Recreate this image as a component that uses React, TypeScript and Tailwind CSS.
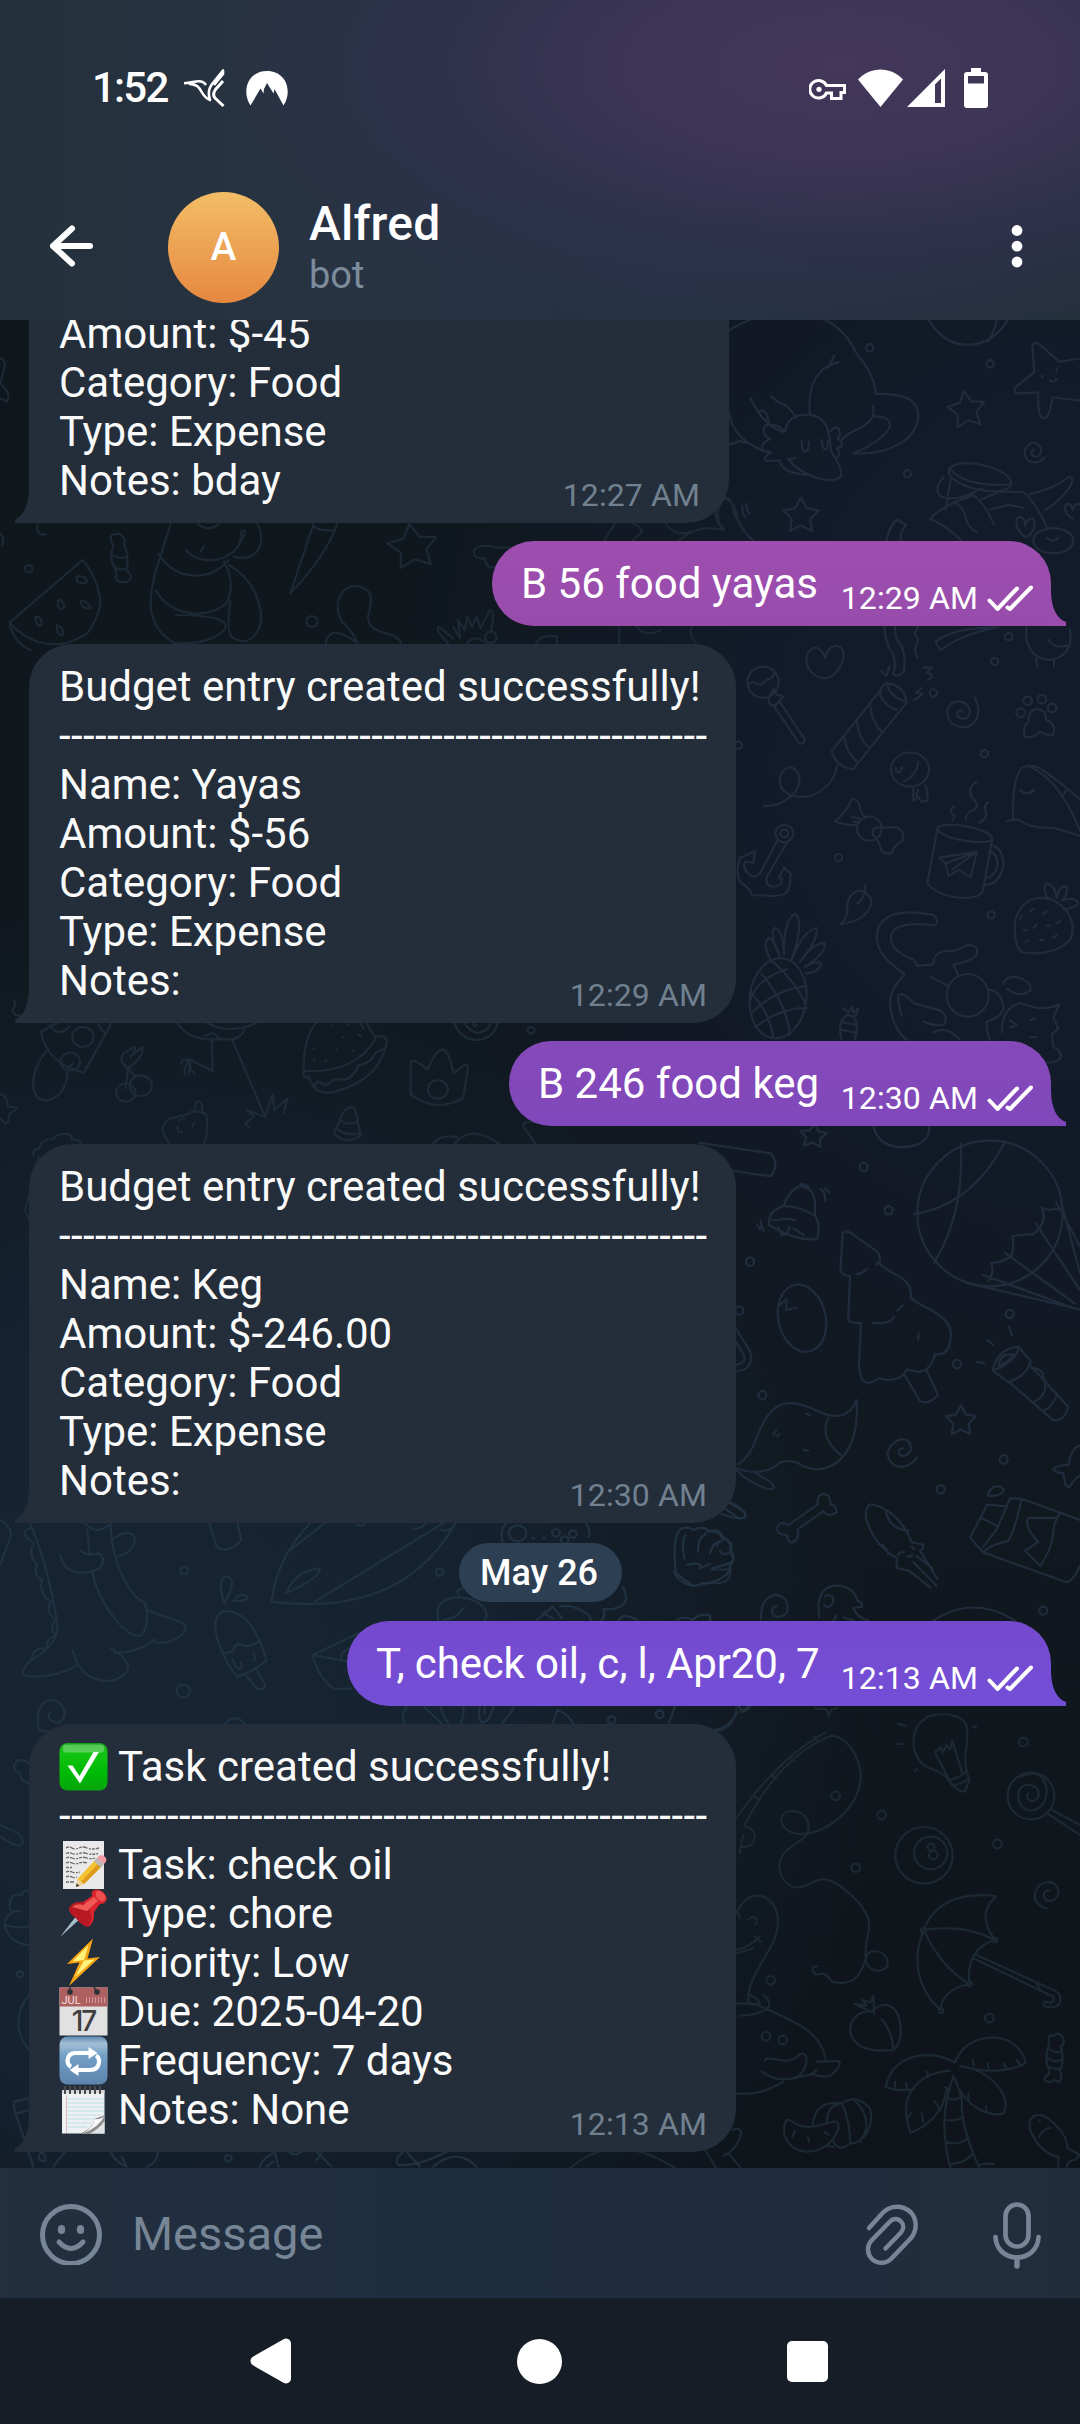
import type { ReactNode } from 'react'

type EmojiName = 'check' | 'memo' | 'pin' | 'bolt' | 'calendar' | 'repeat' | 'notepad'
type Line = { text: string; emoji?: EmojiName }

const DASHES = '-'.repeat(54)

/* ---------- status bar icons ---------- */

function BirdIcon() {
  return (
    <svg width="42" height="38" viewBox="0 0 42 38" fill="none" stroke="white" strokeWidth="2.6" strokeLinejoin="round">
      <path d="M0 14.2C7 14 10 12.300 15 12.300C18.500 12.300 20.500 14 22 16" />
      <path d="M5 14.600C13 15.500 15 18 18 23.500C20 27 22.500 29.500 26 31C24 25 24 20 28.500 14.500L39 1.500V5L30 16" />
      <path d="M39 12L31.500 20.500C29 24 29 26.500 31 29L39.500 37" strokeWidth="3" />
    </svg>
  )
}

function MountainIcon() {
  return (
    <svg width="42" height="35" viewBox="0 0 42 35" fill="white">
      <path d="M4.500 34.500C-5 20 2 0 21 0S47 20 37.500 34.500L28.500 18L27.500 22.500L21 12L18 18L17.500 22.500L14.500 17.500Z" />
    </svg>
  )
}

function KeyIcon() {
  return (
    <svg width="38" height="23" viewBox="0 0 38 23" fill="none" stroke="white" strokeWidth="3">
      <path d="M17.500 7.500A8.800 8.800 0 1 0 17.500 15H22.500V20.500H32V14.500H35.500V7.500Z" />
      <circle cx="10" cy="11.300" r="2.600" fill="white" stroke="none" />
    </svg>
  )
}

function WifiIcon() {
  return (
    <svg width="45" height="38" viewBox="0 0 45 38" fill="white">
      <path d="M0 10.500C12-3 33-3 45 10.500L22.500 38Z" />
    </svg>
  )
}

function SignalIcon() {
  return (
    <svg width="38" height="38" viewBox="0 0 38 38" fill="white">
      <path fillRule="evenodd" d="M38 0V38H0ZM34 9.500L28 15.500V34H34Z" />
    </svg>
  )
}

function BatteryIcon() {
  return (
    <svg width="24" height="40" viewBox="0 0 24 40" fill="white">
      <path fillRule="evenodd" d="M7 0H17V4H21Q24 4 24 7V37Q24 40 21 40H3Q0 40 0 37V7Q0 4 3 4H7ZM4 8V15.500H20V8Z" />
    </svg>
  )
}

/* ---------- emoji ---------- */

function Emoji({ name }: { name: EmojiName }) {
  const drawings: Record<EmojiName, ReactNode> = {
    check: (
      <>
        <defs>
          <linearGradient id="eg" x1="0" y1="0" x2="0" y2="1">
            <stop offset="0" stopColor="#13a013" />
            <stop offset=".2" stopColor="#14c414" />
            <stop offset=".6" stopColor="#00bb06" />
            <stop offset="1" stopColor="#06a50b" />
          </linearGradient>
        </defs>
        <rect x="0.500" y="1" width="48" height="47.500" rx="8" fill="url(#eg)" />
        <rect x="3.500" y="2.500" width="42" height="8" rx="4" fill="#8fe08f" opacity=".55" />
        <path d="M8.500 23.500H13.500L20.500 34L34.500 10H40L21 41.500Z" fill="white" />
      </>
    ),
    memo: (
      <>
        <rect x="4" y="1" width="41" height="48" fill="#e9e9e9" />
        <g stroke="#6b6b6b" strokeWidth="1.300" fill="none" strokeDasharray="3 1 5 1.500 2 1">
          <path d="M7 8Q10 6 13 8T20 8T28 8T40 8" />
          <path d="M7 13.500Q10 12 13 13.500T20 13.500T28 13.500T39 13.500" />
          <path d="M7 18Q10 16.500 13 18T20 18T28 18T36 18" />
          <path d="M7 23Q10 21.500 13 23T20 23T28 23" />
          <path d="M7 27.500H13M7 32Q10 30.500 13 32T21 32M7 37Q10 35.500 13 37T18 37M7 42H15" />
        </g>
        <path d="M17 47L18.500 39L37 19L44 25L25 44Z" fill="#f4c430" />
        <path d="M21.500 42.500L40.500 22L44 25L25 44Z" fill="#dd9a1c" />
        <path d="M17 47L18.500 39L25 44Z" fill="#ecd0a0" />
        <path d="M17 47L17.600 43.600L20.500 45.700Z" fill="#333" />
        <path d="M35 21.500L38 18L45 24L42 27.500Z" fill="#b9b9b9" />
        <path d="M38 18Q41 13.500 45 16Q50 19 45 24Z" fill="#f29aa5" />
      </>
    ),
    pin: (
      <>
        <path d="M1 48L18 26L22 29Z" fill="#a9bccb" />
        <path d="M10 19Q14 12 24 13L33 7Q31 1 38 0.500Q45 1 48 9Q47 15 41 15L35 23Q36 34 29 38Q22 36 17 29Q10 24 10 19Z" fill="#d9232e" />
        <path d="M10 19Q14 12 24 13Q33 20 32 31Q31 36 29 38Q22 36 17 29Q10 24 10 19Z" fill="#b81822" />
        <path d="M13 18Q17 14 24 16L35 8L39 12L28 22Z" fill="#ef5a55" />
        <ellipse cx="41.500" cy="7" rx="6" ry="4" transform="rotate(50 41.500 7)" fill="#f0504f" />
      </>
    ),
    bolt: (
      <>
        <path d="M34 0.500L8 26L20.500 24.500L10 48L41 19L28.500 20.500Z" fill="#f6a313" />
        <path d="M29.500 7L13.500 23.500L25 22L16 39L35.500 21.500L25 22.500Z" fill="#fff27a" />
      </>
    ),
    calendar: (
      <>
        <rect x="0.500" y="0.500" width="48" height="48" fill="#e1e1e1" />
        <rect x="0.500" y="0.500" width="48" height="19" fill="#ae5f60" />
        <circle cx="11" cy="5" r="2.800" fill="#2a2f38" />
        <circle cx="38" cy="5" r="2.800" fill="#2a2f38" />
        <path d="M11 0V4M35 0L37 4" stroke="#2a2f38" strokeWidth="1.500" />
        <path d="M27 13H47" stroke="#d09a9a" strokeWidth="6" strokeDasharray="1 2" />
        <text x="2.500" y="16.500" fontSize="11" fill="#f4dfdf" fontFamily="Roboto, sans-serif">JUL</text>
        <text x="24.500" y="44" fontSize="28" fill="#3f3f3f" textAnchor="middle" letterSpacing="-2" fontWeight="500" fontFamily="Inter, sans-serif">17</text>
      </>
    ),
    repeat: (
      <>
        <defs>
          <linearGradient id="er" x1="0" y1="0" x2="0" y2="1">
            <stop offset="0" stopColor="#5f8bb5" />
            <stop offset=".15" stopColor="#a3bed6" />
            <stop offset=".4" stopColor="#739fc7" />
            <stop offset="1" stopColor="#5d84ad" />
          </linearGradient>
        </defs>
        <rect x="0.500" y="0.500" width="48" height="48" rx="8" fill="url(#er)" />
        <g fill="none" stroke="white" strokeWidth="4.200">
          <path d="M12 31Q8.500 29 8.500 24.500Q9 17 17 17H31" />
          <path d="M37 19.500Q40.500 21.500 40 26.500Q39 34 31 34H18" />
        </g>
        <path d="M29.500 11L38.500 17L29.500 23ZM19.500 28L10.500 34L19.500 40Z" fill="white" />
      </>
    ),
    notepad: (
      <>
        <rect x="3" y="5" width="42.500" height="43.500" fill="#eef1f2" />
        <path d="M8 14H45M8 18H45M8 22H45M8 26H45M8 30H42M8 34H36M8 38H32M8 42H28" stroke="#bcdbe6" strokeWidth="1.200" />
        <path d="M7.500 10V48" stroke="#dba9b5" strokeWidth="0.800" />
        <path d="M3 6.500H45.500" stroke="#d5d5d5" strokeWidth="3" />
        <path d="M6 1V9M11 1V9M16 1V9M21 1V9M26 1V9M31 1V9M36 1V9M41 1V9" stroke="#48484d" strokeWidth="2" />
        <path d="M45.500 30Q38 33 35 34Q35 42 22 48.500H45.500Z" fill="#8c8c8c" />
        <path d="M45.500 31Q40 42 24 48.500Q36 41 34.500 34Q41 35 45.500 31Z" fill="#f8f8f8" />
        <path d="M45.500 36Q40 44 31 48.500H45.500Z" fill="#dfe5e8" />
      </>
    ),
  }
  return (
    <svg className="mr-[10px] h-[49px] w-[49px] shrink-0" viewBox="0 0 49 49">
      {drawings[name]}
    </svg>
  )
}

/* ---------- chat wallpaper ---------- */

function Star({ x, y, r, ry = r, a = 0 }: { x: number; y: number; r: number; ry?: number; a?: number }) {
  let d = ''
  for (let i = 0; i < 10; i++) {
    const k = i % 2 ? 0.52 : 1
    const t = ((i * 36 - 90 + a) * Math.PI) / 180
    d += `${i ? 'L' : 'M'}${(x + r * k * Math.cos(t)).toFixed(1)} ${(y + ry * k * Math.sin(t)).toFixed(1)}`
  }
  return <path d={d + 'Z'} />
}

function Spiral({ x, y, r, ry = r }: { x: number; y: number; r: number; ry?: number }) {
  return (
    <path
      transform={`translate(${x} ${y}) scale(${r / 10} ${ry / 10})`}
      d="M10 5C6 11 -6 12 -9 3C-11 -6 -2 -12 4 -8C9 -4 8 3 2 4C-3 4 -4 -2 0 -3"
    />
  )
}

function Dots({ points, rx, ry }: { points: number[][]; rx: number; ry: number }) {
  return (
    <>
      {points.map(([x, y]) => (
        <ellipse key={`${x}-${y}`} cx={x} cy={y} rx={rx} ry={ry} />
      ))}
    </>
  )
}

function Doodles() {
  return (
    <svg
      className="absolute inset-0 [&_*]:[vector-effect:non-scaling-stroke]"
      width="1080"
      height="1848"
      viewBox="0 320 1080 1848"
      fill="none"
      stroke="#202c3c"
      strokeWidth="2.2"
      strokeLinecap="round"
      strokeLinejoin="round"
    >
      {/* upper right */}
      <g transform="translate(700 310) scale(.33333 .48469)">
        <path d="M88 42C180 0 320-5 400 30C450 55 460 80 475 95C500 115 525 140 527 173C600 172 655 180 655 220C650 270 560 300 460 296C500 285 560 260 570 240C572 225 550 218 520 220C480 255 460 240 425 268M520 198V220" />
        <path d="M330 215C320 150 360 115 415 108M385 118L403 94M152 182Q190 240 252 252M213 178L235 190Q265 195 288 222M175 210Q200 200 206 232M88 215Q100 270 210 296M88 278L120 270L150 276" />
        <path d="M255 250C265 215 300 215 330 216C380 220 390 250 392 290C400 300 425 320 424 342C400 365 300 340 265 308L285 305M255 250L235 240Q190 230 190 250Q195 262 210 266Q180 275 187 290L215 293Q185 305 200 312L240 310Q240 335 320 340" />
        <path d="M305 270Q305 292 316 292Q328 290 326 272M365 268Q368 288 376 288Q385 285 383 270M392 250Q410 235 418 248Q425 258 412 265Q428 270 425 282L410 285Q425 295 410 305" />
        <Dots rx={11} ry={7.5} points={[[509, 78], [870, 111], [622, 338], [884, 725], [926, 674], [853, 915], [416, 1130], [873, 1248], [700, 790], [115, 898]]} />
        <path d="M688 22Q730 72 805 72Q880 70 922 22M890 22Q880 50 865 64" />
        <path d="M997 75Q1005 62 1020 72L1078 107L1140 100M997 75L1003 128L945 160Q940 172 955 172L1015 170Q1010 225 1035 223Q1050 220 1057 180L1140 187M1050 145Q1060 152 1070 142M1027 135V139M1070 121V126" />
        <Star x={800} y={207} r={58} ry={40} a={-8} />
        <Star x={303} y={425} r={56} ry={38} />
        <Spiral x={1002} y={294} r={30} ry={21} />
        <ellipse cx="840" cy="345" rx="95" ry="26" transform="rotate(8 840 345)" />
        <path d="M752 330Q800 365 930 360M730 345Q700 370 720 383Q760 400 845 368M752 350L737 412M690 432Q720 405 820 382Q850 395 882 442M770 400Q795 410 797 430Q805 450 830 458M690 432Q730 440 784 475M845 390L900 375H970Q1010 400 1042 450M870 412L925 402L970 408M990 380Q1060 370 1105 345Q1120 342 1116 357Q1090 390 1035 413" />
        <ellipse cx="1060" cy="476" rx="60" ry="26" />
        <path d="M974 468C940 450 945 420 965 428Q977 432 975 445Q985 425 1002 432C1010 450 990 468 974 468ZM1118 430C1090 420 1090 400 1105 400Q1115 400 1118 412Q1125 395 1140 402M1040 470Q1058 482 1075 470" />
        <path d="M560 475Q570 440 593 433L619 444Q600 455 602 475M75 388Q95 385 103 420Q130 460 158 475M127 405Q125 420 138 427M140 400Q138 415 149 420M45 415Q50 440 72 453" />
        <ellipse cx="189" cy="768" rx="47" ry="32" />
        <path d="M145 775Q155 762 170 772Q190 775 200 762Q225 760 222 745M205 800L215 790L222 780L230 793L250 798L235 808Q230 818 210 815ZM220 815L295 892Q310 900 314 886L237 806" />
        <path d="M375 718C365 690 325 690 319 720C318 745 350 760 380 760C410 755 435 725 430 705C420 685 385 690 375 718Z" />
        <path d="M553 652Q555 690 580 710Q590 740 578 750Q595 760 612 745Q620 700 590 680Q585 665 585 652M655 652L644 668Q660 680 650 690Q640 700 652 717M706 685Q760 655 895 655M706 685L722 702Q780 670 890 655" />
        <path d="M540 785L395 910Q410 945 460 947L620 810Q615 775 560 770Q540 775 540 795Q560 820 590 825M560 770Q570 800 620 808M510 815Q515 850 548 872M470 848Q475 885 510 905M433 882Q440 915 475 935M412 940Q400 985 330 1003C260 1010 225 985 245 955Q275 930 297 960Q305 985 270 1005Q235 1025 192 1023" />
        <path d="M543 745L560 755L568 735M670 738H697L680 748Q710 755 685 763M665 780L648 790L668 793L642 805" />
        <path d="M980 655C970 690 1000 720 1045 722C1090 720 1120 700 1110 660M1045 680Q1060 700 1105 692M1007 718L1012 735M1062 722V735" />
        <path d="M825 800C850 835 825 862 785 861C740 858 730 825 755 812C785 800 815 815 808 835C795 850 765 842 773 830Q780 822 790 830" />
        <path d="M975 880Q965 860 985 850Q985 825 1010 823Q1040 825 1038 845Q1070 855 1060 875Q1045 880 1020 870Q1000 885 975 880Z" />
        <Dots rx={13} ry={9} points={[[962, 831], [983, 806], [1026, 803], [1056, 821]]} />
        <ellipse cx="630" cy="948" rx="57" ry="35" />
        <path d="M655 932Q650 960 612 973M588 945Q585 955 600 953L607 943M640 987V1012L655 1005L665 1015L682 1012Q685 990 675 980M655 990Q645 1000 655 1005" />
        <path d="M405 1055Q440 1035 455 1010Q475 1005 480 1030L495 1048M405 1055Q440 1065 472 1062M455 1045L485 1052M460 1055L478 1058M520 1085Q515 1070 530 1068L590 1067Q615 1075 608 1095Q580 1105 575 1120Q555 1125 545 1115Q540 1100 520 1082" />
        <ellipse cx="508" cy="1070" rx="37" ry="25" />
        <path d="M940 1050Q935 970 965 945Q1000 930 1050 960Q1110 990 1140 1010M922 1055Q950 1045 975 1060Q1010 1070 1060 1068L1140 1085M990 942Q1080 970 1140 1075M960 990Q980 1005 1003 990M1100 990L1090 1000" />
        <ellipse cx="795" cy="1080" rx="82" ry="15" transform="rotate(7 795 1080)" />
        <path d="M713 1066L682 1183Q720 1212 790 1213Q840 1212 848 1200L877 1092M872 1103Q910 1110 910 1145Q900 1185 855 1186M868 1118Q892 1120 893 1145Q885 1170 858 1172M718 1130L830 1118L812 1170L775 1155L745 1168L737 1142ZM737 1142L830 1118L755 1155M797 1050Q800 1035 825 1030Q840 1020 815 1005Q800 985 830 973M758 1052Q770 1045 755 1038Q745 1030 763 1024M838 1058Q860 1050 858 1038Q850 1020 865 1015" />
        <ellipse cx="253" cy="1080" rx="27" ry="18" />
        <ellipse cx="253" cy="1080" rx="12" ry="8" />
        <path d="M232 1095L180 1162Q170 1170 155 1168Q125 1155 135 1138L160 1140L165 1117L120 1130Q105 1160 120 1180Q145 1190 158 1208L190 1207Q220 1212 255 1205Q275 1190 270 1168L275 1165L252 1150L237 1172L247 1175Q245 1190 215 1190Q195 1185 200 1170L262 1097" />
        <path d="M422 1267Q445 1255 442 1225Q450 1200 480 1198Q515 1205 514 1225Q500 1260 422 1267M497 1187Q495 1215 470 1225" />
        <ellipse cx="234" cy="1420" rx="88" ry="80" transform="rotate(-35 234 1420)" />
        <path d="M185 1370Q260 1430 270 1495M220 1345Q290 1390 315 1430M155 1450Q230 1400 320 1395M150 1425Q170 1380 260 1360M165 1480Q240 1440 320 1440M155 1410Q210 1450 220 1500" />
        <path d="M215 1345Q185 1310 205 1295Q225 1300 240 1335Q205 1285 225 1275Q250 1280 252 1330Q250 1260 285 1246Q315 1260 275 1340Q310 1280 350 1275Q355 1300 300 1345Q340 1305 375 1307Q375 1330 315 1355Q350 1340 365 1350Q350 1370 318 1368" />
        <path d="M1000 1215Q1060 1205 1100 1240Q1130 1270 1110 1300Q1060 1335 965 1325Q940 1310 945 1260Q960 1225 1000 1215ZM1045 1215Q1025 1190 1040 1183Q1065 1185 1070 1213Q1080 1185 1100 1190Q1105 1205 1085 1218Q1120 1210 1135 1222Q1130 1235 1090 1236M965 1250L960 1258M1000 1235L990 1242M1040 1240L1030 1247M970 1280H980M1010 1268L1000 1275M1050 1270H1040M1080 1260L1070 1266M975 1305L985 1300M1020 1300H1030M1060 1295L1070 1290" />
        <path d="M615 1370C570 1350 515 1320 535 1275C560 1235 640 1240 700 1248Q720 1258 705 1270C660 1265 600 1265 580 1280C555 1310 600 1330 640 1340L652 1353L700 1350Q700 1325 740 1322Q770 1325 800 1310Q840 1310 830 1330Q810 1345 760 1350L775 1373M615 1370Q570 1400 570 1430Q575 1480 620 1506M605 1455Q590 1420 597 1412Q620 1410 640 1430L720 1445Q750 1460 730 1475Q700 1478 670 1468M692 1376L740 1393M868 1402Q905 1405 910 1440Q905 1460 860 1468Q860 1490 870 1506M700 1490Q740 1475 780 1506M910 1390Q920 1370 960 1378Q1000 1390 990 1405Q960 1420 920 1400M905 1490Q905 1440 960 1430L1000 1438Q1040 1445 1078 1433L1060 1460L1075 1482L1055 1495L1060 1520Q1090 1530 1080 1545Q1060 1555 1035 1552M930 1465L950 1475L930 1480M990 1465L1005 1462M990 1500H1010" />
        <ellipse cx="803" cy="1414" rx="63" ry="44" />
        <path d="M425 1505Q410 1470 440 1455Q475 1455 470 1485L465 1505M430 1470L470 1475M425 1485L468 1492M430 1440L445 1450L455 1437L460 1450L473 1442Q475 1455 460 1458" />
      </g>

      {/* middle right */}
      <g transform="translate(700 1120) scale(.33333 .38265)">
        <Star x={340} y={42} r={42} ry={33} a={6} />
        <Star x={783} y={787} r={47} ry={42} />
        <Dots rx={12} ry={11} points={[[491, 123], [566, 236], [150, 370], [187, 719], [722, 965], [911, 887], [1030, 1282], [118, 498], [929, 507], [771, 638]]} />
        <path d="M0 60L212 87Q240 115 212 147L95 132M520 16Q535 70 605 71Q690 70 688 16" />
        <path d="M250 225Q270 180 300 173Q340 175 345 215V250M250 225Q300 225 345 250Q365 280 350 312Q280 315 208 275Q200 240 250 225ZM215 262H230Q260 255 285 262M298 172Q310 160 328 178M235 280Q240 305 262 298M268 280Q265 300 245 302M310 300L280 283M362 180Q378 192 375 210M375 178L388 190M172 275L180 285M182 262Q182 280 192 290" />
        <ellipse cx="870" cy="244" rx="218" ry="190" />
        <path d="M782 62Q795 240 703 373M916 55Q820 220 643 246M1140 330L1068 215M1140 445L1007 270M1125 480L915 347M1115 490L850 405M1140 495L797 425M1025 228Q1040 240 1082 230M1025 228Q1045 270 1000 298Q950 300 937 305Q945 345 930 358Q900 375 873 373Q885 400 865 420M1082 210L1140 400" />
        <path d="M428 295Q440 285 460 300L525 340Q545 350 538 375C580 410 640 410 632 465C680 500 770 510 750 580Q745 615 705 612Q690 660 650 658L620 652Q600 690 535 675Q480 710 477 640L483 530Q440 535 445 510L450 408Q415 405 422 380ZM470 403Q490 400 500 390M520 530Q570 535 582 515M592 498L608 485M528 378L540 370M655 558V572M615 668L660 735Q690 745 714 718L680 655" />
        <ellipse cx="306" cy="518" rx="70" ry="90" transform="rotate(-20 306 518)" />
        <path d="M236 485L260 468L258 497L290 490M108 545L150 605Q165 650 110 657M108 580L132 615Q140 635 108 640" />
        <path d="M108 910Q190 935 240 895Q280 885 310 905C370 930 480 900 470 732C450 775 410 785 350 760C240 710 200 760 170 830Q150 880 115 900M385 778Q355 830 428 880M318 768L330 771M312 862L325 864M220 822L228 812M230 827L237 822M108 915Q150 950 205 965Q235 965 210 945L165 922M60 1028Q130 1050 137 1035Q130 1010 85 998" />
        <path d="M353 993Q360 970 385 982Q395 1000 390 1005Q410 1005 410 1025Q385 1040 370 1022L293 1070Q300 1095 275 1105Q260 1100 262 1085Q235 1085 230 1068Q240 1045 265 1058L353 1005Z" />
        <path d="M600 835Q570 845 562 870Q570 910 610 906Q640 900 650 882M600 835Q630 830 634 860Q620 885 598 875Q590 860 610 858" />
        <path d="M590 1145Q520 1110 498 1040Q495 1000 520 1005Q600 1025 635 1103L670 1110Q670 1125 660 1125L712 1200M590 1145V1170L628 1178L692 1222M640 1155L710 1218M650 1140L698 1172M558 1025Q570 1070 625 1073M535 1108Q560 1110 565 1135M595 1138Q595 1128 610 1130M622 1140Q635 1145 637 1135M635 1115L642 1122" />
        <path d="M878 655Q890 600 955 592L992 630Q980 670 925 685ZM955 595Q950 630 880 655M895 642Q900 610 940 612Q930 630 895 642M930 687L1060 785Q1095 785 1105 750L990 640M995 648Q1035 650 1030 680M1035 690Q1040 720 1005 735M1070 720Q1060 745 1035 758M862 575L880 588M927 540L936 563M832 632L852 636" />
        <path d="M862 1005L810 1092L850 1130L1100 1208Q1120 1205 1140 1165M862 1005L920 1010L890 1070L850 1115M845 1040L890 1060M965 990L1140 1045M965 990Q945 1070 925 1100Q870 1110 850 1130M920 1010L930 988L965 990M1080 1028Q1060 1050 1058 1090Q1050 1130 1020 1165L975 1125L1015 1103Q970 1060 985 1040H1070M865 975Q885 945 912 965Q905 985 865 982ZM1140 850Q1110 860 1107 900Q1060 905 1060 915Q1075 925 1090 922Q1095 965 1110 958Q1125 935 1140 930" />
        <path d="M15 1080Q50 1060 68 1088Q95 1100 90 1130Q110 1150 90 1165Q100 1210 50 1210H0M50 1115Q55 1100 68 1100M90 1130Q65 1140 60 1125M35 1175H90M0 1172L30 1160M183 1305Q180 1250 225 1241Q270 1245 262 1285Q245 1305 220 1295Q210 1270 230 1270M355 1270Q360 1215 415 1217Q460 1220 472 1255Q490 1262 485 1272L460 1275Q470 1300 505 1308M358 1300L355 1270M375 1245Q400 1235 400 1258Q390 1280 372 1268M400 1308L410 1295M700 1308Q820 1240 945 1308M430 1300L460 1308" />
      </g>

      {/* lower right */}
      <g transform="translate(700 1700) scale(.33333)" stroke="#1c2832">
        <Dots rx={13} ry={13} points={[[407, 287], [970, 126], [467, 503], [212, 841], [892, 432], [545, 345], [198, 1009], [248, 1020], [868, 954]]} />
        <path d="M110 18Q105 90 45 95M150 18Q145 40 115 35M345 25L380 28L385 48L395 28L413 24M800 80Q790 40 715 43C620 50 620 180 690 205Q735 220 745 240Q770 275 795 275L808 240Q790 190 798 150Q805 110 800 80M745 235L705 157L722 142L728 158L740 136L750 148L757 123L787 220M745 240Q780 235 800 212M755 255Q785 255 805 235M593 71L616 77M590 132L606 132M645 213L651 207M820 82L829 77" />
        <ellipse cx="993" cy="288" rx="70" ry="70" />
        <path d="M960 230Q1030 200 1040 270C1040 350 950 350 955 280C960 240 1025 250 1015 290C1005 315 970 300 985 280M1052 328L1140 375M1045 342L1140 405" />
        <path d="M108 355Q240 170 375 98M133 375Q240 170 390 108M343 110L352 125M270 170L282 182M215 225L226 238M165 290L177 300M390 108C440 105 480 170 483 230C475 330 380 400 300 402C240 400 225 340 270 333C330 330 335 390 315 410C280 440 240 450 237 500C245 560 290 575 330 550C370 530 390 535 430 565C500 620 515 660 505 700C495 740 495 780 500 790C520 830 570 810 563 785C555 745 500 745 498 775C480 830 460 860 395 845Q385 825 365 820Q345 830 338 812Q335 800 352 798M135 380Q165 385 165 410Q160 445 125 440M130 405L118 460" />
        <ellipse cx="672" cy="466" rx="86" ry="85" />
        <ellipse cx="692" cy="459" rx="50" ry="49" />
        <circle cx="693" cy="441" r="10" />
        <circle cx="700" cy="465" r="13" />
        <path d="M108 640Q140 575 190 590C240 610 245 680 215 735C180 800 140 850 145 905Q155 920 180 910Q175 895 145 883M145 660Q155 645 170 658Q172 670 165 672M110 635Q120 645 120 655M108 750Q150 740 178 710M163 708L183 725M108 760L160 745M108 910L165 912Q230 940 280 965Q370 1010 378 1085L415 1083Q430 1090 395 1125Q370 1135 340 1122L290 1132Q230 1150 186 1115M195 1082C200 1060 260 1100 290 1070Q315 1050 320 1075Q320 1115 285 1135M108 1180Q180 1190 250 1145M378 1085L350 1085M350 1110L330 1125M120 947Q180 945 207 920Q210 895 190 885" />
        <path d="M515 935C470 930 440 970 455 1010Q480 1060 580 1050Q610 1025 600 970C595 920 555 895 515 935ZM545 958Q575 990 580 1045M515 935L463 912L500 917L487 900L512 908L520 888L523 942" />
        <path d="M672 690C700 610 780 575 888 588C855 620 840 660 885 720C830 735 800 780 808 852C760 860 720 890 723 930C650 870 635 770 672 690ZM672 690Q790 670 885 720M672 690Q720 800 808 852M825 763L1055 868C1095 880 1085 925 1055 922Q1020 920 1035 905Q1065 915 1060 890L820 775M1012 852L1020 868" />
        <Dots rx={7} ry={7} points={[[670, 691], [885, 720], [809, 852], [723, 932]]} />
        <path d="M1040 625Q1000 615 1005 580C1020 530 1080 540 1075 580C1065 615 1025 605 1032 580Q1038 568 1048 572M1048 1030Q1040 1000 1060 1008Q1075 990 1090 1015Q1095 1035 1082 1038Q1095 1085 1080 1113Q1090 1140 1075 1147Q1065 1135 1055 1145Q1030 1150 1035 1130Q1050 1125 1048 1112Q1030 1080 1048 1030ZM1050 1048Q1065 1060 1085 1055M1040 1070Q1055 1090 1085 1080M1048 1100Q1060 1110 1080 1105" />
        <path d="M765 1088C790 1010 900 990 950 1040Q985 1080 972 1093C900 1125 830 1110 780 1098M765 1088C690 1045 580 1060 557 1160Q590 1175 640 1168M750 1112C650 1120 590 1190 632 1298C680 1280 730 1240 740 1170M780 1098C870 1110 940 1190 910 1240C860 1255 800 1210 780 1170M760 1128Q725 1230 735 1310Q740 1370 752 1403M760 1128Q790 1190 785 1220Q790 1300 838 1403M742 1195Q765 1205 785 1190M738 1260Q770 1265 790 1250M738 1325Q780 1340 805 1312M748 1390Q790 1395 820 1360M838 1395Q860 1388 882 1393M585 1145V1160M618 1150L620 1165M680 1115L685 1128M818 1080L822 1095M862 1090L866 1105M910 1090L922 1108M950 1080L962 1095M805 1180V1200M858 1220L860 1238M665 1240L670 1265M622 1255L633 1238M702 1202L722 1230M735 1162L750 1170" />
        <path d="M252 1300Q250 1255 270 1260Q310 1295 380 1270Q420 1255 415 1285C390 1370 270 1380 252 1300ZM338 1275Q345 1200 425 1210Q470 1180 510 1225C525 1280 490 1330 450 1330L430 1343Q410 1345 400 1325M380 1270Q380 1215 425 1210Q450 1260 450 1325M465 1203Q505 1240 498 1290Q490 1310 480 1325M285 1292L278 1310M323 1308L327 1325M373 1295L385 1305M375 1338L400 1340" />
        <path d="M990 1290C980 1240 1020 1235 1050 1260Q1100 1300 1103 1345L1140 1365L1125 1380Q1105 1380 1100 1400M990 1290Q1020 1360 1075 1370V1400M1018 1310Q1025 1290 1050 1283M1018 1262V1265M15 1350L48 1403M95 1290Q125 1280 123 1300Q115 1340 85 1360L122 1403M70 1368L85 1360" />
      </g>

      {/* upper left */}
      <g transform="translate(0 310) scale(.47192 .33333)" stroke="#1c2833">
        <path d="M0 145Q15 150 8 180L0 220Q25 250 15 275L0 265M0 670Q10 680 5 705M80 640Q75 680 98 673M235 690Q230 670 255 672Q268 690 262 700Q275 740 268 780Q285 800 270 815Q245 820 245 800Q250 790 243 775Q230 740 240 710ZM238 735Q255 750 268 740M240 765Q250 785 268 775" />
        <Dots rx={8} ry={11} points={[[61, 776]]} />
        <ellipse cx="661" cy="934" rx="12" ry="16" />
        <path d="M175 750L20 938C60 1000 120 1030 185 970Q220 900 210 850Q200 790 175 750ZM20 938Q30 1000 65 1020M163 800Q180 795 185 812Q182 825 163 815ZM123 870Q130 865 137 888Q130 905 123 890ZM170 873Q185 870 192 895Q175 900 170 873ZM75 920Q90 920 88 945Q78 955 75 920ZM120 945Q135 950 133 975Q120 980 120 945Z" />
        <path d="M362 640L335 760C310 870 310 950 370 1000M335 730C370 810 440 820 485 750M395 720C420 770 500 760 513 680Q505 665 518 662Q520 680 508 690M495 740C550 760 565 690 545 640M418 640Q440 670 465 640M425 725L432 708M475 755Q500 820 480 880C440 930 360 920 330 840M372 915C450 915 490 930 475 960C450 1000 400 1000 370 1000M488 870Q480 960 490 980C530 1020 560 960 552 900Q540 810 485 765M665 640L615 850Q690 740 715 640M665 650Q680 665 710 660" />
        <Star x={875} y={712} r={55} ry={70} a={-8} />
        <path d="M690 1000Q695 965 715 968Q740 980 758 1000Q745 960 725 935C700 870 730 825 755 828C800 840 785 880 780 920Q780 960 820 970Q845 980 850 1000M1050 770Q1030 780 1028 745Q1000 750 1005 718Q1020 700 1050 712L1110 715M950 1000Q920 960 930 950L960 985M960 950L975 985L970 930L985 960L990 920L1000 950L1010 920L1018 955L1038 900Q1050 900 1040 965" />
        <ellipse cx="1040" cy="982" rx="12" ry="17" />
        <path d="M990 1000Q1005 970 1030 1000M1135 1000Q1150 970 1180 980V1000M1280 693L1303 640M1340 640Q1360 650 1360 665L1340 693M1312 950V1000M1350 950Q1365 985 1400 960M1465 950Q1460 980 1475 1000M1410 640Q1430 680 1465 665M1440 690Q1480 640 1530 660Q1510 600 1535 565Q1560 575 1565 640" />
      </g>

      {/* between the second and third exchange */}
      <g transform="translate(0 1000) scale(.35714 .33333)" stroke="#1d2b37">
        <path d="M40 0Q45 15 35 30Q40 50 55 45L60 65M115 95L160 69M115 95Q130 190 235 218L312 69M140 75Q160 115 195 80M278 69Q275 85 295 98M135 150C90 190 70 300 130 302C190 290 190 220 188 205L205 190" />
        <circle cx="232" cy="111" r="30" />
        <circle cx="197" cy="185" r="27" />
        <circle cx="352" cy="278" r="27" />
        <circle cx="394" cy="257" r="31" />
        <path d="M352 265L358 205Q330 180 345 160L378 140Q380 155 365 170L398 142Q405 170 358 205L380 230M497 69Q520 110 575 118H650Q680 110 685 85M580 69Q640 105 718 69M573 108L595 98L615 115M593 118L595 213L530 178Q505 178 508 192M530 178Q510 210 520 225M530 180V222M530 180Q530 205 545 223M650 118L742 350L688 330L712 350L686 370L698 381M742 350L763 284L768 330L805 295L795 338" />
        <path d="M850 205C850 150 860 100 885 69M1025 69L1052 115C1020 180 950 220 850 212V228Q870 240 865 230Q880 290 940 275Q1060 240 1083 130Q1085 105 1055 108M880 262Q885 240 900 248Q915 265 930 240Q960 235 960 240Q990 235 1005 195Q1040 190 1050 160L1072 148M1008 69L1018 85M928 75V77M975 72V76M962 110V113M1003 104L1012 109M878 145V147M942 149V151M990 151V154M879 178V181M912 182V185" />
        <path d="M1150 185Q1160 175 1197 208Q1220 150 1240 148Q1255 150 1270 220L1300 195Q1315 190 1308 220L1297 295Q1220 340 1150 283Z" />
        <circle cx="1226" cy="268" r="28" />
        <path d="M1272 69Q1290 120 1335 120Q1385 115 1393 69M1300 69Q1320 100 1340 98Q1365 95 1375 69M1325 69Q1325 85 1335 75M935 400L960 340Q980 310 995 330L1010 405Q970 440 935 400ZM950 358Q970 380 1000 365M942 385Q970 410 1007 400M457 400Q450 370 480 355L530 340Q545 325 578 345Q585 400 570 432M457 400L475 432M545 335Q545 300 560 305Q570 315 565 335L575 340M498 380Q495 400 510 397M500 362L515 352M543 368L538 383M0 282Q20 285 22 320L47 322Q35 340 27 340Q25 375 15 370L0 355M95 468Q85 450 110 445Q115 415 150 418Q155 400 190 402Q205 410 200 420Q220 415 225 430M108 470L70 632L80 655M1212 432Q1235 400 1280 412M1272 432Q1320 370 1398 432M1500 432L1465 380Q1465 360 1497 367" />
        <circle cx="1487" cy="91" r="10" />
      </g>

      {/* around the date */}
      <g transform="translate(0 1500) scale(.48469 .33333)" stroke="#203241">
        <path d="M0 60Q25 80 22 110L0 195M62 69Q100 200 118 370Q125 430 60 485C40 520 40 530 70 530Q120 530 160 495M228 69C230 200 270 290 300 310C290 350 390 350 383 390C370 420 350 430 320 428M62 85Q45 90 55 115Q65 120 70 130Q60 150 68 180Q80 195 75 200Q70 230 88 240Q80 260 92 290Q100 300 105 305Q95 330 110 355M115 360Q100 380 115 408Q90 420 100 445Q70 440 65 475M175 69Q200 110 230 69M180 90L185 165M165 150Q175 170 205 160Q220 180 205 205C170 230 130 220 125 165M190 215C200 290 250 410 290 408Q310 380 300 310M235 115Q260 90 275 105C285 130 270 160 243 168M150 450C160 520 190 540 220 543C260 540 270 500 262 490Q250 460 228 445M320 418Q290 455 235 460M432 69L447 140Q470 165 498 120L490 69" />
        <Dots rx={8} ry={11} points={[[380, 211], [907, 217], [1262, 660], [1361, 643]]} />
        <ellipse cx="378" cy="573" rx="14" ry="19" />
        <path d="M463 310Q445 230 470 229Q490 240 463 310ZM482 303Q495 275 511 290Q510 305 482 303ZM460 460C440 400 435 335 470 333C510 340 530 390 550 480Q530 510 490 530Q470 500 460 460L480 455Q485 425 500 435Q510 445 533 425M480 475Q485 510 498 505Q500 495 497 487M522 460Q530 470 523 483M507 525L530 565Q545 575 547 555L530 510" />
        <path d="M560 305C570 200 600 130 640 69M560 305C700 330 850 300 940 69M595 155L670 69M650 305L915 69M590 280Q610 210 660 205Q660 235 590 280ZM735 75Q750 80 755 69M855 85Q865 90 880 69M910 90Q920 95 930 85" />
        <path d="M740 400L645 465Q655 530 690 568L725 565M645 465L718 485M720 445Q700 460 705 475M80 690Q70 620 100 600C140 600 140 660 120 668Q95 665 103 635M100 695L80 690M465 670Q485 640 505 670M835 670Q825 640 840 620M875 620L910 670M910 620Q910 640 925 670M950 670Q960 640 955 620M990 620Q985 660 995 668Q1010 665 1018 620M1000 620V640M1060 620Q1055 640 1035 670M1140 670L1150 630Q1170 640 1183 670M1380 670L1392 620M1450 690Q1500 700 1520 640M1525 620Q1530 640 1545 620" />
        <ellipse cx="1068" cy="100" rx="18" ry="24" />
        <path d="M1037 125Q1030 90 1045 69M1215 110Q1220 90 1208 69M1098 115H1102M1120 115H1125" />
        <Dots rx={8} ry={11} points={[[1147, 98], [1182, 102], [1165, 120]]} />
        <path d="M905 363C895 310 920 290 950 292C1000 300 1010 340 1000 363M955 325Q945 355 915 360M950 292Q935 270 955 265M1285 262C1300 300 1290 330 1245 328Q1250 350 1240 363M1105 363L1140 320L1160 355M1120 340L1140 355M1155 320Q1180 310 1215 345L1220 363M1275 363Q1285 335 1315 360M1397 360Q1410 345 1430 360Q1440 340 1465 345V363" />
        <path d="M1395 215C1390 180 1390 120 1400 92Q1415 75 1430 90Q1450 75 1465 95Q1485 90 1490 115Q1515 125 1508 150Q1520 180 1505 190Q1515 240 1430 258Q1400 250 1390 215L1430 258M1412 175Q1405 120 1415 105M1440 155Q1440 110 1455 105M1465 160Q1470 130 1485 125M1470 205L1505 190M1418 195Q1450 185 1445 200M1490 20L1525 55Q1545 55 1535 35L1500 5" />
      </g>

      {/* lower left edge */}
      <g transform="translate(0 1710) scale(.33333)" stroke="#20313f">
        <path d="M88 160Q60 140 45 160Q35 180 60 190Q60 215 88 220M0 345L55 370Q75 390 65 405Q55 415 0 380M88 545Q70 535 65 555Q30 550 30 580Q25 600 40 605L60 603M40 605Q10 620 15 650Q30 700 88 705M15 645Q50 655 88 650M88 855Q55 890 55 945Q60 990 88 1020M88 1165L42 1175Q40 1200 50 1220L100 1370M50 1210L88 1200M160 1370L195 1325M120 1350Q110 1340 125 1325Q140 1340 135 1355ZM330 1325Q350 1360 380 1370L365 1340M475 1325Q470 1360 440 1370M780 1370Q790 1340 825 1328L835 1370M800 1370L820 1355M865 1325Q885 1340 905 1325M950 1325L995 1370M965 1330L950 1350M1210 1325Q1180 1350 1195 1365Q1250 1370 1340 1325M1220 1325L1260 1370M1300 1370Q1370 1310 1430 1370" />
        <circle cx="60" cy="793" r="9" />
        <circle cx="685" cy="1345" r="10" />
      </g>
      <path d="M570 2168Q615 2130 675 2168" stroke="#1c2a35" />
    </svg>
  )
}

/* ---------- messages ---------- */

function Incoming({ lines, time, box }: { lines: Line[]; time: string; box: string }) {
  return (
    <div className={`relative ml-[29px] shrink-0 rounded-br-[43px] bg-[#232e3a] py-[18px] pl-[30px] ${box}`}>
      <svg className="absolute bottom-0 -left-[14px]" width="15" height="36" viewBox="0 0 15 36" fill="#232e3a">
        <path d="M14 0H15V36H0V32.500C9 28 14 18 14 0Z" />
      </svg>
      {lines.map((line, i) => (
        <div key={i} className="flex h-[49px] items-center whitespace-nowrap text-[42px] leading-[49px] text-[#fafafa]">
          {line.emoji && <Emoji name={line.emoji} />}
          {line.text === DASHES ? <span className="tracking-[0.4px]">{line.text}</span> : line.text}
        </div>
      ))}
      <span className="absolute right-[29px] bottom-[9px] text-[32px] leading-[37px] tracking-[0.1px] text-[#71808f]">{time}</span>
    </div>
  )
}

function Outgoing({ text, time, style }: { text: string; time: string; style: { box: string; tail: string } }) {
  return (
    <div className={`relative mr-[29px] flex h-[85px] shrink-0 items-end justify-between self-end rounded-[42px] rounded-br-none pr-[18px] pb-[9px] pl-[29px] text-white ${style.box}`}>
      <span className="mb-[9px] text-[42px] leading-[49px] whitespace-nowrap">{text}</span>
      <span className="flex items-end">
        <span className="text-[32px] leading-[37px] tracking-[0.1px] whitespace-nowrap">{time}</span>
        <svg className="mb-[6px] ml-[9px]" width="46" height="26" viewBox="0 0 46 26" fill="none" stroke="white" strokeWidth="4" strokeLinecap="round" strokeLinejoin="round">
          <path d="M2.500 15.500L10.500 24L30 3.500M20.500 22.500L23 24L44 2.500" />
        </svg>
      </span>
      <svg className={`absolute -right-[15px] bottom-0 ${style.tail}`} width="16" height="36" viewBox="0 0 16 36" fill="currentColor">
        <path d="M0 0H1C1 18 7 29 16 32V36H0Z" />
      </svg>
    </div>
  )
}

const t = (text: string, emoji?: EmojiName): Line => ({ text, emoji })

export default function App() {
  return (
    <div className="flex h-[2424px] w-[1080px] flex-col overflow-hidden bg-[#161d26] font-[Roboto,sans-serif]">
      <header className="z-10 flex h-[320px] shrink-0 flex-col bg-[radial-gradient(ellipse_620px_270px_at_840px_65px,#43375a_0%,#3d3556_35%,rgba(48,49,78,0.7)_68%,rgba(40,50,68,0)_100%),linear-gradient(90deg,#24303b_0%,#283342_25%,#263245_60%,#25303d_100%)]">
        <div className="flex h-[176px] items-center pr-[92px] pl-[92px] text-white">
          <span className="w-[92px] text-[42px] leading-none font-medium tracking-[-1.800px]">1:52</span>
          <div className="flex items-center gap-[20px]">
            <BirdIcon />
            <MountainIcon />
          </div>
          <div className="ml-auto flex items-center">
            <div className="mt-[3px] mr-[11px]"><KeyIcon /></div>
            <WifiIcon />
            <div className="ml-[4px]"><SignalIcon /></div>
            <div className="ml-[19px]"><BatteryIcon /></div>
          </div>
        </div>
        <div className="mt-[16px] flex h-[111px] items-center pr-[54px] pl-[50px]">
          <svg className="-mt-[3px]" width="44" height="42" viewBox="0 0 44 42" fill="none" stroke="white" strokeWidth="6" strokeLinecap="round" strokeLinejoin="round">
            <path d="M22 3.500L3 21L22 38.500M3 21H40" />
          </svg>
          <div className="ml-[74px] flex h-[111px] w-[111px] items-center justify-center rounded-full bg-linear-to-b from-[#f3bd66] to-[#e58840] text-[39px] font-medium text-white">
            A
          </div>
          <div className="-mt-[1px] ml-[30px] flex flex-col">
            <span className="text-[48px] leading-[56px] font-medium tracking-[0.2px] text-white">Alfred</span>
            <span className="text-[38px] leading-[46px] text-[#7c8c9b]">bot</span>
          </div>
          <svg className="-mt-[2px] mr-[3px] ml-auto" width="12" height="44" viewBox="0 0 12 44" fill="white">
            <circle cx="6" cy="5.500" r="5.400" />
            <circle cx="6" cy="21.200" r="5.400" />
            <circle cx="6" cy="37" r="5.400" />
          </svg>
        </div>
      </header>

      <main className="relative flex h-[1848px] shrink-0 flex-col justify-end overflow-hidden bg-[radial-gradient(ellipse_700px_800px_at_100%_22%,#131a2a_0%,#131a2a_40%,rgba(19,26,42,0)_100%),radial-gradient(ellipse_750px_800px_at_12%_75%,#172433_0%,#152230_45%,rgba(21,34,48,0)_100%),linear-gradient(180deg,#0f171d_0%,#11181f_60%,#0e141a_100%)] pb-[16px]">
        <Doodles />
        <div className="relative flex flex-col gap-[18px]">
          <Incoming
            box="w-[700px]"
            time="12:27 AM"
            lines={[t('Amount: $-45'), t('Category: Food'), t('Type: Expense'), t('Notes: bday')]}
          />
          <Outgoing text="B 56 food yayas" time="12:29 AM" style={{ box: 'w-[559px] bg-linear-to-b from-[#9d4eae] to-[#974cac]', tail: 'text-[#984cac]' }} />
          <Incoming
            box="w-[707px] rounded-t-[43px]"
            time="12:29 AM"
            lines={[t('Budget entry created successfully!'), t(DASHES), t('Name: Yayas'), t('Amount: $-56'), t('Category: Food'), t('Type: Expense'), t('Notes:')]}
          />
          <Outgoing text="B 246 food keg" time="12:30 AM" style={{ box: 'w-[542px] bg-linear-to-b from-[#8549b9] to-[#8048bb]', tail: 'text-[#8048bb]' }} />
          <Incoming
            box="w-[707px] rounded-t-[43px]"
            time="12:30 AM"
            lines={[t('Budget entry created successfully!'), t(DASHES), t('Name: Keg'), t('Amount: $-246.00'), t('Category: Food'), t('Type: Expense'), t('Notes:')]}
          />
          <div className="mt-[2px] mb-[1px] flex h-[59px] w-[163px] items-center justify-center self-center rounded-full bg-[#2d3f52] pr-[2px] text-[36px] leading-none font-medium text-white">
            May 26
          </div>
          <Outgoing text="T, check oil, c, l, Apr20, 7" time="12:13 AM" style={{ box: 'w-[704px] tracking-[-0.15px] bg-linear-to-b from-[#7549ce] to-[#734fd7]', tail: 'text-[#734fd7]' }} />
          <Incoming
            box="w-[707px] rounded-t-[43px]"
            time="12:13 AM"
            lines={[
              t('Task created successfully!', 'check'),
              t(DASHES),
              t('Task: check oil', 'memo'),
              t('Type: chore', 'pin'),
              t('Priority: Low', 'bolt'),
              t('Due: 2025-04-20', 'calendar'),
              t('Frequency: 7 days', 'repeat'),
              t('Notes: None', 'notepad'),
            ]}
          />
        </div>
      </main>

      <div className="flex h-[130px] shrink-0 items-center bg-linear-to-r from-[#232f3e] via-[#1f2d41] via-40% to-[#222d3c] pr-[38px] pl-[39px] text-[#768696]">
        <svg width="64" height="64" viewBox="0 0 64 64" fill="none" stroke="currentColor" strokeWidth="5" strokeLinecap="round">
          <circle cx="32" cy="34" r="28.500" />
          <path d="M20 41Q32 54 44 41" />
          <ellipse cx="22.500" cy="28.500" rx="3.700" ry="4.500" fill="currentColor" stroke="none" />
          <ellipse cx="41.500" cy="28.500" rx="3.700" ry="4.500" fill="currentColor" stroke="none" />
        </svg>
        <span className="mt-[1px] ml-[29px] text-[47px] leading-[56px]">Message</span>
        <svg className="mt-[4px] ml-auto" width="54" height="62" viewBox="0 0 54 62" fill="none" stroke="currentColor" strokeWidth="4.500" strokeLinecap="round">
          <path d="M4 24L18 8.500C26 .5 38 1 45.500 8C52 15 52.500 26 46 34L26 55C21 60 12 60 7 55C2 50 1.500 42 6.500 36.500L25 17.500C28 14 33 14 36 17.500C39 20.500 39 25 36 28.500L20.500 44.500" />
        </svg>
        <svg className="mt-[3px] ml-[73px]" width="50" height="70" viewBox="0 0 50 70" fill="none" stroke="currentColor" strokeWidth="4.700" strokeLinecap="round">
          <rect x="13.500" y="4.500" width="23" height="42" rx="11.500" />
          <path d="M3.500 37C4 49 13 57.500 25 57.500S46 49 46.500 37" />
          <path d="M25 58V66" strokeWidth="5.500" />
        </svg>
      </div>

      <nav className="flex h-[126px] shrink-0 items-center bg-[#161d26] pl-[250px]">
        <svg width="42" height="46" viewBox="0 0 42 46" fill="white" stroke="white" strokeWidth="10" strokeLinejoin="round">
          <path d="M5.500 23L36 5.500V40.500Z" />
        </svg>
        <div className="ml-[225px] h-[45px] w-[45px] rounded-full bg-white" />
        <div className="ml-[225px] h-[41px] w-[41px] rounded-[5px] bg-white" />
      </nav>
    </div>
  )
}
